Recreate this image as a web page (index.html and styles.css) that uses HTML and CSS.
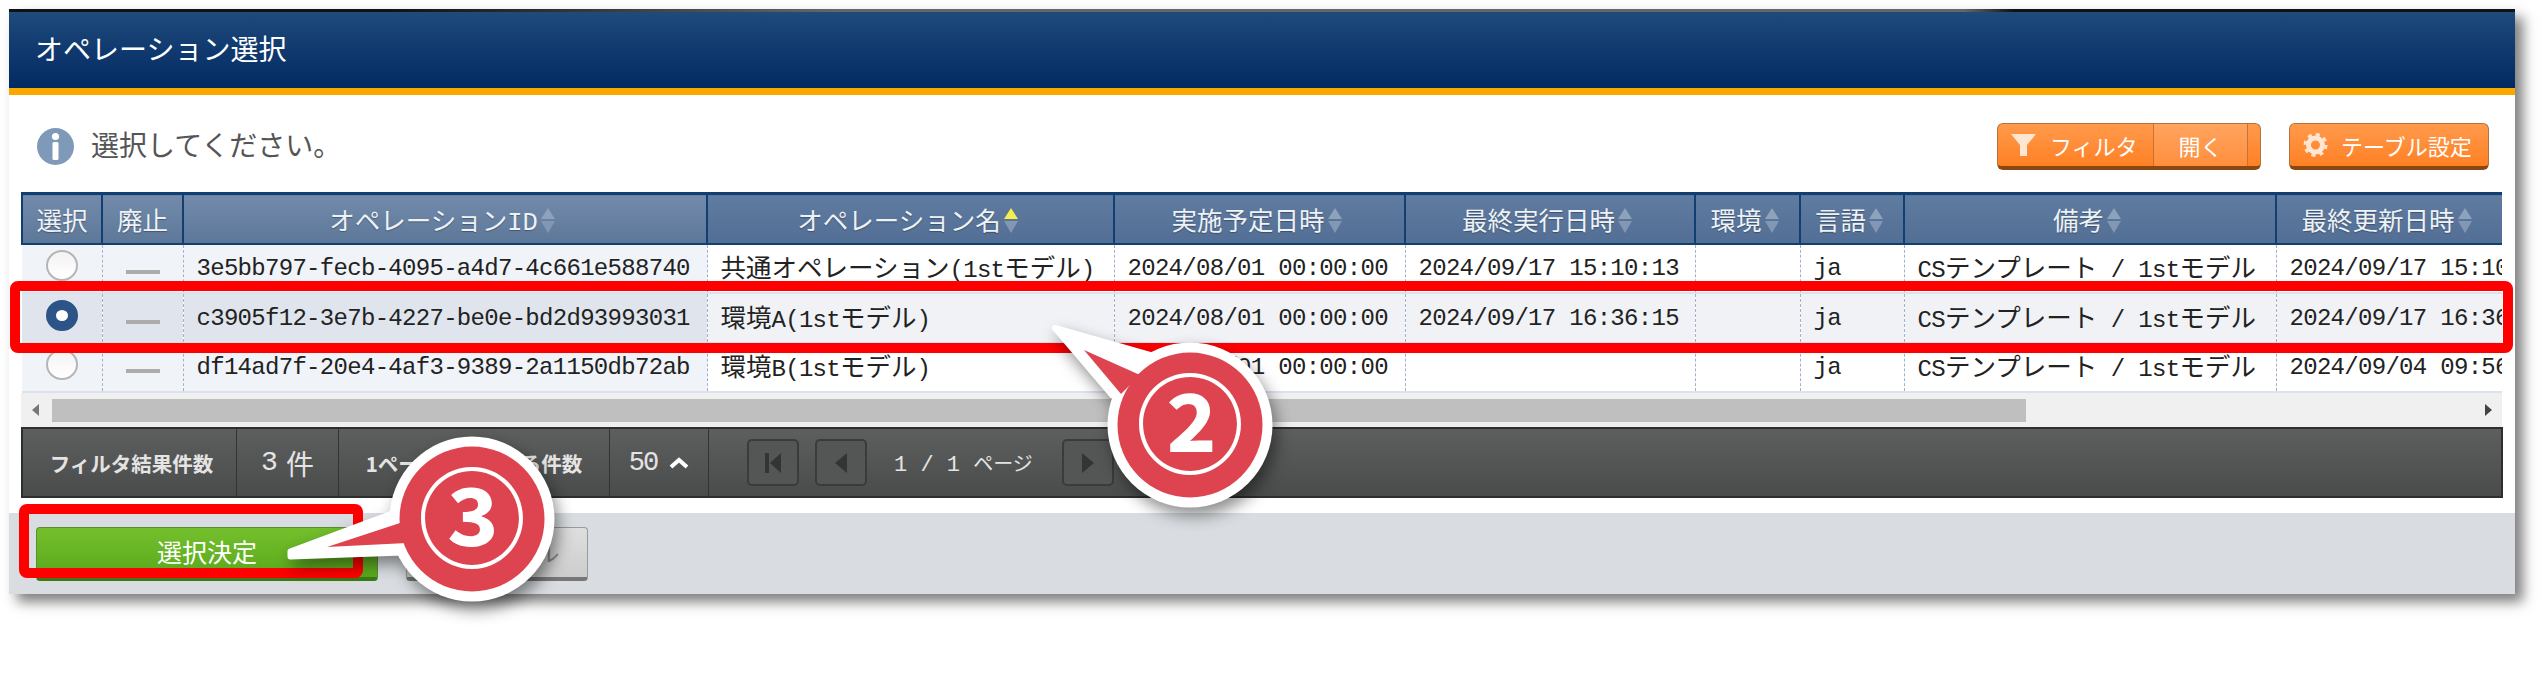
FILE: index.html
```html
<!DOCTYPE html>
<html lang="ja">
<head>
    <meta charset="UTF-8">
    <title>オペレーション選択</title>
    <link rel="stylesheet" href="styles.css">
</head>
<body>
<div class="window">
    <div class="title-bar">オペレーション選択</div>

    <div class="toolbar">
        <div class="message">
            <svg class="info-icon" viewBox="0 0 37 37">
                <circle cx="18.5" cy="18.5" r="18.5" fill="#7f99b9"/>
                <circle cx="18.5" cy="8.5" r="3.6" fill="#fff"/>
                <rect x="15.5" y="14" width="6" height="18" rx="1.5" fill="#fff"/>
            </svg>
            <span class="message-text">選択してください。</span>
        </div>
        <div class="tools">
            <div class="btn-orange filter-btn">
                <div class="seg seg-main">
                    <svg class="tool-icon" viewBox="0 0 25 24"><path d="M0 1h25l-9 11v11h-7v-11z" fill="#ffe6d2"/></svg>
                    <span>フィルタ</span>
                </div>
                <div class="seg seg-open">開く</div>
                <div class="seg seg-end"></div>
            </div>
            <div class="btn-orange setting-btn">
                <div class="seg seg-main">
                    <svg class="tool-icon" viewBox="0 0 24 24">
                        <circle cx="12" cy="12" r="7" fill="none" stroke="#ffe6d2" stroke-width="5"/>
                        <circle cx="12" cy="12" r="10.5" fill="none" stroke="#ffe6d2" stroke-width="3" stroke-dasharray="4 4.25"/>
                    </svg>
                    <span>テーブル設定</span>
                </div>
            </div>
        </div>
    </div>

    <div class="table-wrap">
        <table class="op-table">
            <colgroup>
                <col class="c-select"><col class="c-disuse"><col class="c-id"><col class="c-name">
                <col class="c-date"><col class="c-date2"><col class="c-env"><col class="c-lang">
                <col class="c-note"><col class="c-updated">
            </colgroup>
            <thead>
                <tr>
                    <th class="fixed">選択</th>
                    <th class="fixed">廃止</th>
                    <th class="fixed sortable">オペレーションID<i class="sort"></i></th>
                    <th class="sortable">オペレーション名<i class="sort asc"></i></th>
                    <th class="sortable">実施予定日時<i class="sort"></i></th>
                    <th class="sortable">最終実行日時<i class="sort"></i></th>
                    <th class="sortable">環境<i class="sort"></i></th>
                    <th class="sortable">言語<i class="sort"></i></th>
                    <th class="sortable">備考<i class="sort"></i></th>
                    <th class="sortable">最終更新日時<i class="sort"></i></th>
                </tr>
            </thead>
            <tbody>
                <tr>
                    <td class="fixed mid"><span class="radio"></span></td>
                    <td class="fixed mid"><span class="dash"></span></td>
                    <td class="fixed">3e5bb797-fecb-4095-a4d7-4c661e588740</td>
                    <td><span class="jp">共通オペレーション</span>(1st<span class="jp">モデル</span>)</td>
                    <td>2024/08/01 00:00:00</td>
                    <td>2024/09/17 15:10:13</td>
                    <td></td>
                    <td>ja</td>
                    <td>CS<span class="jp">テンプレート</span> / 1st<span class="jp">モデル</span></td>
                    <td>2024/09/17 15:10:13</td>
                </tr>
                <tr class="selected">
                    <td class="fixed mid"><span class="radio on"></span></td>
                    <td class="fixed mid"><span class="dash"></span></td>
                    <td class="fixed">c3905f12-3e7b-4227-be0e-bd2d93993031</td>
                    <td><span class="jp">環境</span>A(1st<span class="jp">モデル</span>)</td>
                    <td>2024/08/01 00:00:00</td>
                    <td>2024/09/17 16:36:15</td>
                    <td></td>
                    <td>ja</td>
                    <td>CS<span class="jp">テンプレート</span> / 1st<span class="jp">モデル</span></td>
                    <td>2024/09/17 16:36:15</td>
                </tr>
                <tr>
                    <td class="fixed mid"><span class="radio"></span></td>
                    <td class="fixed mid"><span class="dash"></span></td>
                    <td class="fixed">df14ad7f-20e4-4af3-9389-2a1150db72ab</td>
                    <td><span class="jp">環境</span>B(1st<span class="jp">モデル</span>)</td>
                    <td>2024/08/01 00:00:00</td>
                    <td></td>
                    <td></td>
                    <td>ja</td>
                    <td>CS<span class="jp">テンプレート</span> / 1st<span class="jp">モデル</span></td>
                    <td>2024/09/04 09:56:12</td>
                </tr>
            </tbody>
        </table>
    </div>

    <div class="scrollbar">
        <i class="arrow-left"></i>
        <div class="thumb"></div>
        <i class="arrow-right"></i>
    </div>

    <div class="pager">
        <div class="cell cell-label">フィルタ結果件数</div>
        <div class="cell cell-count">3 <span class="jp">件</span></div>
        <div class="cell cell-label2">1ページに表示する件数</div>
        <div class="cell cell-size">50
            <svg class="chevron" viewBox="0 0 20 12"><path d="M2 10l8-7 8 7" fill="none" stroke="#fff" stroke-width="4"/></svg>
        </div>
        <div class="nav">
            <span class="nav-btn first"><svg viewBox="0 0 20 24"><path d="M2 2h4v20h-4zM18 2v20l-11-10z" fill="#333534"/></svg></span>
            <span class="nav-btn"><svg viewBox="0 0 20 24"><path d="M16 2v20l-12-10z" fill="#333534"/></svg></span>
            <span class="page-no">1 / 1 <span class="page-jp">ページ</span></span>
            <span class="nav-btn next"><svg viewBox="0 0 20 24"><path d="M4 2v20l12-10z" fill="#333534"/></svg></span>
        </div>
    </div>

    <div class="footer">
        <button class="btn-ok">選択決定</button>
        <button class="btn-cancel">キャンセル</button>
    </div>
</div>

<!-- 注釈 -->
<svg class="annotations" width="2544" height="686" viewBox="0 0 2544 686">
    <rect x="15" y="286" width="2493" height="62" rx="3" fill="none" stroke="#f00" stroke-width="10"/>
    <rect x="24" y="509" width="334" height="64" rx="3" fill="none" stroke="#f00" stroke-width="10"/>

    <g class="callout">
        <path d="M1055 328L1150 355L1112 395z" fill="#fff" stroke="#fff" stroke-width="6" stroke-linejoin="round"/>
        <circle cx="1190" cy="425" r="82.5" fill="#fff"/>
        <path d="M1084 350L1140 375L1121 394z" fill="#dd444f"/>
        <circle cx="1190" cy="425" r="72.5" fill="#dd444f"/>
        <text class="callout-no" x="1190" y="465">②</text>
    </g>
    <g class="callout">
        <path d="M290 551L392 513L403 553L290 557z" fill="#fff" stroke="#fff" stroke-width="5" stroke-linejoin="round"/>
        <circle cx="472" cy="519" r="82.5" fill="#fff"/>
        <path d="M327 547L400 523L407 543z" fill="#dd444f"/>
        <circle cx="472" cy="519" r="72.5" fill="#dd444f"/>
        <text class="callout-no" x="472" y="559">③</text>
    </g>
</svg>
</body>
</html>
```

FILE: styles.css
```css
body {
    margin: 0;
    height: 686px;
    overflow: hidden;
    background-color: #fff;
    font-family: "Noto Sans CJK JP", sans-serif;
    color: #222;
}
.window {
    margin: 9px 0 0 9px;
    width: 2506px;
    height: 585px;
    background-color: #fff;
    border-top: 3px solid #444;
    border-bottom: 2px solid #444;
    border-image: linear-gradient(90deg, #111 0, #111 15%, #666 33%, #666 78%, #111 80%, #111 100%) 1;
    box-sizing: border-box;
    box-shadow: 8px 8px 12px rgba(0, 0, 0, 0.5);
}
.title-bar {
    height: 76px;
    line-height: 72px;
    padding-left: 26px;
    font-size: 28px;
    color: #fff;
    background: linear-gradient(#1f4a7c, #012a62);
    border-bottom: 7px solid #fca600;
}

.toolbar {
    height: 97px;
    display: flex;
    justify-content: space-between;
    padding: 28px 26px 0 28px;
    box-sizing: border-box;
}
.message {
    display: flex;
    align-items: center;
    gap: 17px;
    height: 47px;
    font-size: 28px;
    color: #555;
}
.message-text {
    margin-top: -5px;
}
.info-icon {
    width: 37px;
    height: 37px;
}
.tools {
    display: flex;
    gap: 28px;
}
.btn-orange {
    display: flex;
    height: 47px;
    box-sizing: border-box;
    color: #fff;
    font-size: 22px;
    line-height: 40px;
    border: 1px solid #b3733c;
    border-bottom: 4px solid #8a4710;
    border-radius: 6px;
    background: linear-gradient(#ff9a4c, #ff8024);
    overflow: hidden;
}
.filter-btn {
    width: 264px;
}
.setting-btn {
    width: 200px;
}
.seg {
    display: flex;
    align-items: center;
    box-sizing: border-box;
}
.seg-main {
    gap: 13px;
    padding: 0 0 0 13px;
}
.filter-btn .seg-main {
    width: 155px;
    gap: 14px;
}
.seg-open {
    width: 95px;
    justify-content: center;
    background: linear-gradient(#ffa45f, #ff8f3e);
    border-left: 1px solid #c4743a;
    border-right: 1px solid #c4743a;
}
.seg-end {
    flex: 1;
}
.tool-icon {
    width: 25px;
    height: 24px;
    flex: none;
}

.table-wrap {
    width: 2481px;
    margin-left: 12px;
    overflow: hidden;
}
.op-table {
    width: 2481px;
    table-layout: fixed;
    border-collapse: collapse;
    font-family: "Liberation Mono", "Noto Sans CJK JP", monospace;
}
.c-select { width: 80px; }
.c-disuse { width: 81px; }
.c-id { width: 524px; }
.c-name { width: 407px; }
.c-date { width: 291px; }
.c-date2 { width: 290px; }
.c-env { width: 105px; }
.c-lang { width: 104px; }
.c-note { width: 372px; }
.c-updated { width: 227px; }
.op-table th {
    height: 50px;
    padding: 0;
    box-sizing: border-box;
    font-size: 25.5px;
    font-weight: normal;
    color: #eef2f7;
    white-space: nowrap;
    background: linear-gradient(#5f7ba0, #526e94);
    border: 2px solid #123f72;
    border-top: 3px solid #123f72;
    text-shadow: 0 1px 1px rgba(0, 0, 0, 0.3);
}
.op-table th.sortable {
    padding-right: 6px;
}
.op-table th.fixed {
    background: linear-gradient(#728bab, #5d7799);
}
.op-table td {
    height: 49.6px;
    padding: 1px 0 0 13px;
    box-sizing: border-box;
    font-size: 24px;
    letter-spacing: -0.7px;
    color: #222;
    white-space: nowrap;
    overflow: hidden;
    background-color: #fff;
    border-right: 1px dashed #9fb2cc;
    border-bottom: 2px solid #dbe2ec;
}
.op-table td.fixed {
    background-color: #f0f3f8;
}
.op-table td.mid {
    padding: 0;
    text-align: center;
}
.selected td {
    background-color: #f0f2f6;
}
.selected td.fixed {
    background-color: #e0e5ed;
}
.jp {
    font-family: "Noto Sans CJK JP", sans-serif;
    font-size: 25.5px;
    letter-spacing: 0;
    line-height: 1;
}
.sort {
    display: inline-block;
    position: relative;
    width: 14px;
    height: 25px;
    margin-left: 3px;
    vertical-align: -3px;
}
.sort::before,
.sort::after {
    content: "";
    position: absolute;
    left: 0;
    border-left: 7px solid transparent;
    border-right: 7px solid transparent;
}
.sort::before {
    top: 0;
    border-bottom: 11px solid #8ea2bc;
}
.sort::after {
    bottom: 0;
    border-top: 12px solid #8197b3;
}
.sort.asc::before {
    border-bottom-color: #f4ef4e;
}
.radio {
    display: inline-block;
    width: 32px;
    height: 31px;
    margin-bottom: 5px;
    border: 2px solid #b5b5b5;
    border-radius: 50%;
    box-sizing: border-box;
    background: linear-gradient(#f3f3f3, #fff);
    vertical-align: middle;
}
.radio.on {
    border: 10px solid #2c5486;
    background: #fff;
}
.dash {
    display: inline-block;
    width: 34px;
    height: 4px;
    margin-top: 7px;
    background-color: #acacac;
    vertical-align: middle;
}

.scrollbar {
    position: relative;
    display: flex;
    align-items: center;
    width: 2481px;
    height: 34px;
    margin-left: 12px;
    box-sizing: border-box;
    background-color: #f0f0f0;
}
.thumb {
    width: 1974px;
    height: 23px;
    margin-left: 31px;
    background-color: #bfbfbf;
}
.arrow-left,
.arrow-right {
    position: absolute;
    top: 11px;
    border-top: 6px solid transparent;
    border-bottom: 6px solid transparent;
}
.arrow-left {
    left: 11px;
    border-right: 7px solid #777;
}
.arrow-right {
    right: 10px;
    border-left: 7px solid #444;
}

.pager {
    display: flex;
    width: 2482px;
    height: 71px;
    margin-left: 12px;
    box-sizing: border-box;
    color: #e4e4e4;
    background: linear-gradient(#5d5f5e, #4a4c4b);
    border: 2px solid #2d2e2e;
}
.cell {
    display: flex;
    align-items: center;
    justify-content: center;
    box-sizing: border-box;
    border-right: 1px solid #333;
    white-space: nowrap;
}
.cell-label {
    width: 214px;
    font-size: 20.5px;
    font-weight: 700;
    padding: 0 0 0 4px;
}
.cell-count {
    width: 102px;
    font-family: "Liberation Mono", monospace;
    font-size: 28px;
    gap: 8px;
}
.cell-count .jp {
    font-size: 28px;
}
.cell-label2 {
    width: 271px;
    font-size: 20.5px;
    font-weight: 700;
}
.cell-size {
    width: 99px;
    font-family: "Liberation Mono", monospace;
    font-size: 27px;
    gap: 12px;
    letter-spacing: -2px;
}
.chevron {
    width: 20px;
    height: 12px;
}
.nav {
    display: flex;
    align-items: center;
    margin-left: 38px;
    gap: 16px;
}
.nav-btn {
    display: flex;
    align-items: center;
    justify-content: center;
    width: 52px;
    height: 47px;
    box-sizing: border-box;
    border: 2px solid #3a3c3b;
    border-radius: 5px;
    background-color: #545655;
}
.nav-btn svg {
    width: 20px;
    height: 24px;
}
.page-no {
    width: 152px;
    margin-left: 11px;
    font-family: "Liberation Mono", monospace;
    font-size: 22px;
    white-space: pre;
}
.page-jp {
    font-family: "Noto Sans CJK JP", sans-serif;
    font-size: 20px;
}

.footer {
    display: flex;
    gap: 28px;
    height: 81px;
    margin-top: 15px;
    padding: 14px 0 0 27px;
    box-sizing: border-box;
    background-color: #d9dde1;
}
.btn-ok,
.btn-cancel {
    height: 54px;
    padding: 0 0 3px;
    font-family: "Noto Sans CJK JP", sans-serif;
    font-size: 25px;
    border-radius: 4px;
    cursor: pointer;
}
.btn-ok {
    width: 342px;
    color: #fff;
    background: linear-gradient(#74bf2c, #59a91c);
    border: 1px solid #5a8c36;
    border-bottom: 4px solid #3b7a12;
}
.btn-cancel {
    width: 182px;
    color: #888;
    background: linear-gradient(#dedede, #cdcdcd);
    border: 1px solid #9a9a9a;
    border-bottom: 4px solid #777;
}

.annotations {
    position: absolute;
    top: 0;
    left: 0;
}
.callout {
    filter: drop-shadow(4px 8px 8px rgba(0, 0, 0, 0.45));
}
.callout-no {
    font-family: "Noto Sans CJK JP", sans-serif;
    font-size: 108px;
    font-weight: 700;
    fill: #fff;
    text-anchor: middle;
}
```
